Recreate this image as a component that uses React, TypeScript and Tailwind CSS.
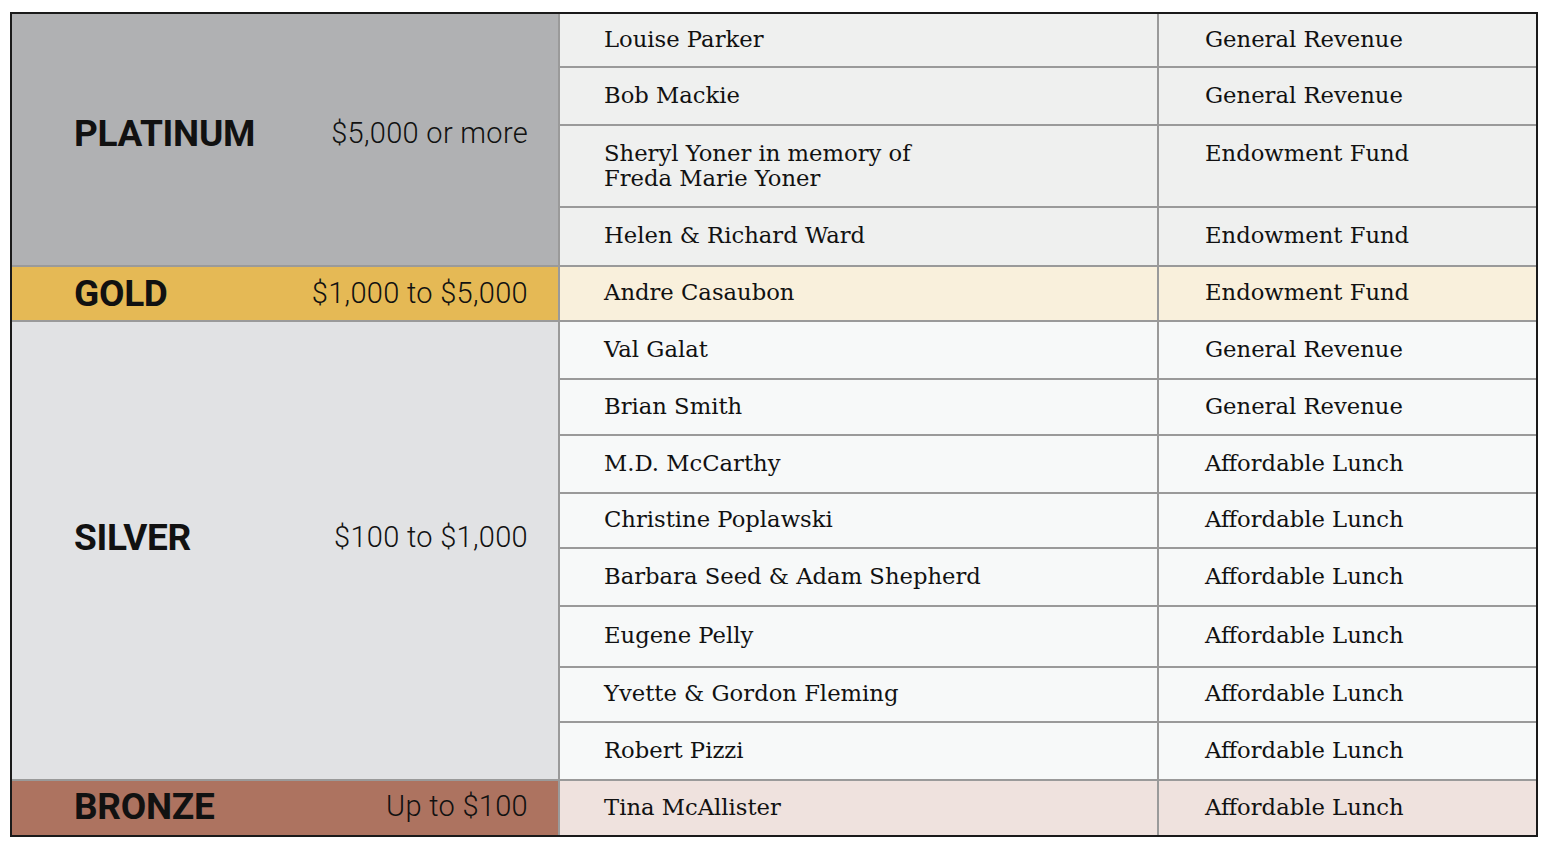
import React from "react";

type Row = { name: React.ReactNode; fund: string; h: string; top?: boolean };

interface Tier {
  label: string;
  range: string;
  tierBg: string;
  rowBg: string;
  pad: string;
  rows: Row[];
}

const tiers: Tier[] = [
  {
    label: "PLATINUM",
    range: "$5,000 or more",
    tierBg: "bg-[#b0b1b3]",
    rowBg: "bg-[#eff0ef]",
    pad: "pb-[13px]",
    rows: [
      { name: "Louise Parker", fund: "General Revenue", h: "h-[52px]" },
      { name: "Bob Mackie", fund: "General Revenue", h: "h-[58px]" },
      {
        name: (
          <>
            Sheryl Yoner in memory of
            <br />
            Freda Marie Yoner
          </>
        ),
        fund: "Endowment Fund",
        h: "h-[82px]",
        top: true,
      },
      { name: "Helen & Richard Ward", fund: "Endowment Fund", h: "h-[59px]" },
    ],
  },
  {
    label: "GOLD",
    range: "$1,000 to $5,000",
    tierBg: "bg-[#e5b955]",
    rowBg: "bg-[#f9f0dc]",
    pad: "",
    rows: [{ name: "Andre Casaubon", fund: "Endowment Fund", h: "h-[55px]" }],
  },
  {
    label: "SILVER",
    range: "$100 to $1,000",
    tierBg: "bg-[#e1e2e4]",
    rowBg: "bg-[#f7f9f9]",
    pad: "pb-[26px]",
    rows: [
      { name: "Val Galat", fund: "General Revenue", h: "h-[58px]" },
      { name: "Brian Smith", fund: "General Revenue", h: "h-[56px]" },
      { name: "M.D. McCarthy", fund: "Affordable Lunch", h: "h-[58px]" },
      { name: "Christine Poplawski", fund: "Affordable Lunch", h: "h-[55px]" },
      { name: "Barbara Seed & Adam Shepherd", fund: "Affordable Lunch", h: "h-[58px]" },
      { name: "Eugene Pelly", fund: "Affordable Lunch", h: "h-[61px]" },
      { name: "Yvette & Gordon Fleming", fund: "Affordable Lunch", h: "h-[55px]" },
      { name: "Robert Pizzi", fund: "Affordable Lunch", h: "h-[58px]" },
    ],
  },
  {
    label: "BRONZE",
    range: "Up to $100",
    tierBg: "bg-[#ad7360]",
    rowBg: "bg-[#efe2de]",
    pad: "pb-[4px]",
    rows: [{ name: "Tina McAllister", fund: "Affordable Lunch", h: "h-[56px]" }],
  },
];

const serif = "font-['DejaVu_Serif',serif] text-[22.7px] leading-[25px] text-[#111]";
const sans = "font-['Roboto',sans-serif] leading-none text-[#111]";

export default function App() {
  return (
    <div className="w-[1550px] h-[848px] bg-white pt-[12px] pl-[10px]">
      <div className="w-[1528px] border-2 border-[#1a1a1a] flex flex-col">
        {tiers.map((t, ti) => (
          <div key={t.label} className="flex">
            <div
              className={`w-[548px] shrink-0 flex items-center justify-between pl-[62px] pr-[30px] border-r-2 border-[#9a9a9a] ${
                ti > 0 ? "border-t-2" : ""
              } ${t.tierBg} ${t.pad}`}
            >
              <span className={`${sans} font-bold text-[37px] tracking-[-0.3px]`}>{t.label}</span>
              <span className={`${sans} font-light text-[29px] tracking-[0.3px]`}>{t.range}</span>
            </div>
            <div className={`flex-1 flex flex-col ${t.rowBg}`}>
              {t.rows.map((r, ri) => (
                <div
                  key={ri}
                  className={`flex ${r.h} ${ti > 0 || ri > 0 ? "border-t-2 border-[#9a9a9a]" : ""}`}
                >
                  <div
                    className={`w-[599px] shrink-0 border-r-2 border-[#9a9a9a] pl-[44px] flex ${
                      r.top ? "items-start pt-[15px]" : "items-center pb-[2px]"
                    } ${serif}`}
                  >
                    <span>{r.name}</span>
                  </div>
                  <div
                    className={`flex-1 pl-[46px] flex ${
                      r.top ? "items-start pt-[15px]" : "items-center pb-[2px]"
                    } ${serif}`}
                  >
                    {r.fund}
                  </div>
                </div>
              ))}
            </div>
          </div>
        ))}
      </div>
    </div>
  );
}
